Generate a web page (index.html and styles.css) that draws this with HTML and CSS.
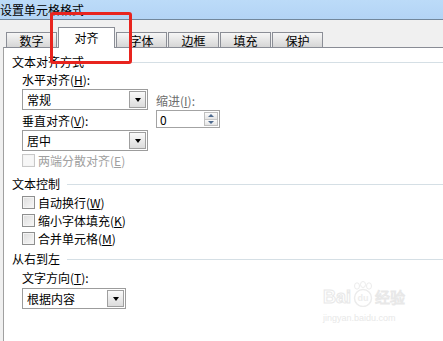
FILE: index.html
```html
<!DOCTYPE html>
<html lang="zh-CN">
<head>
    <meta charset="UTF-8">
    <title>设置单元格格式</title>
    <link rel="stylesheet" href="styles.css">
</head>
<body>
<div class="window">
    <div class="titlebar"><span class="title">设置单元格格式</span></div>

    <div class="tabs">
        <div class="tab">数字</div>
        <div class="tab active">对齐</div>
        <div class="tab">字体</div>
        <div class="tab">边框</div>
        <div class="tab">填充</div>
        <div class="tab">保护</div>
    </div>

    <div class="panel">
        <div class="group-title">文本对齐方式</div>
        <div class="align-group">
            <div class="col-left">
                <div class="label">水平对齐(<u>H</u>):</div>
                <div class="select"><span>常规</span><span class="drop"></span></div>
                <div class="label gap">垂直对齐(<u>V</u>):</div>
                <div class="select"><span>居中</span><span class="drop"></span></div>
            </div>
            <div class="col-right">
                <div class="label muted">缩进(<u>I</u>):</div>
                <div class="spin">
                    <span>0</span>
                    <span class="spin-btns"><span class="up"></span><span class="down"></span></span>
                </div>
            </div>
        </div>
        <div class="check disabled first"><span class="box"></span>两端分散对齐(<u>E</u>)</div>

        <div class="group-title">文本控制</div>
        <div class="checks">
            <div class="check"><span class="box"></span>自动换行(<u>W</u>)</div>
            <div class="check"><span class="box"></span>缩小字体填充(<u>K</u>)</div>
            <div class="check"><span class="box"></span>合并单元格(<u>M</u>)</div>
        </div>

        <div class="group-title rtl">从右到左</div>
        <div class="label indent">文字方向(<u>T</u>):</div>
        <div class="select short"><span>根据内容</span><span class="drop"></span></div>
    </div>

    <!-- 红框标注 -->
    <div class="highlight"></div>

    <div class="watermark">
        <div class="wm-logo">
            <span class="wm-bai">Bai</span>
            <svg class="wm-paw" width="22" height="26" viewBox="0 0 22 26">
                <ellipse cx="5" cy="5" rx="2.5" ry="3.2" fill="none" stroke="#ececec"/>
                <ellipse cx="11" cy="3.5" rx="2.5" ry="3" fill="none" stroke="#ececec"/>
                <ellipse cx="17" cy="5" rx="2.5" ry="3.2" fill="none" stroke="#ececec"/>
                <circle cx="11" cy="17" r="8.5" fill="none" stroke="#ececec" stroke-width="1.5"/>
                <text x="11" y="20" font-size="9" font-weight="bold" text-anchor="middle" fill="#ededed" font-family="Liberation Sans, sans-serif">du</text>
            </svg>
            <span class="wm-jy">经验</span>
        </div>
        <div class="wm-url">jingyan.baidu.com</div>
    </div>
</div>
</body>
</html>
```

FILE: styles.css
```css
html, body {
    margin: 0;
    height: 100%;
}
body {
    font-family: "Noto Sans CJK SC", "Noto Sans", sans-serif;
    font-size: 12px;
    color: #000;
    background: #f0f0f0;
    overflow: hidden;
}
u {
    text-decoration: underline;
}
.window {
    position: relative;
    height: 100%;
    display: flex;
    flex-direction: column;
}

/* 标题栏 */
.titlebar {
    height: 19px;
    border-bottom: 1px solid #72879b;
    background: linear-gradient(#bcdbf8, #b3d4f5);
    display: flex;
    align-items: center;
}
.title {
    margin-left: 0;
    font-size: 12px;
    line-height: 19px;
}

/* 选项卡 */
.tabs {
    height: 27px;
    display: flex;
    align-items: flex-end;
    gap: 1px;
    padding-left: 6px;
}
.tab {
    box-sizing: border-box;
    width: 51px;
    height: 15px;
    border: 1px solid #8b8e96;
    border-bottom: none;
    background: linear-gradient(#f6f6f6, #d6d6d6);
    text-align: center;
    line-height: 15px;
}
.tab.active {
    width: 57px;
    height: 21px;
    margin-bottom: -1px;
    background: #fff;
    line-height: 20px;
    position: relative;
    z-index: 1;
}

/* 内容面板 */
.panel {
    flex: 1;
    margin-left: 3px;
    border-top: 1px solid #898c95;
    border-left: 1px solid #a0a0a0;
    background: #fff;
    padding: 6px 0 0 8px;
}
.group-title {
    display: flex;
    align-items: center;
    height: 16px;
    line-height: 16px;
}
.group-title::after {
    content: "";
    flex: 1;
    height: 1px;
    margin-left: 7px;
    background: #d5dfe5;
}
.label {
    height: 16px;
    line-height: 16px;
}
.label.gap {
    margin-top: 3px;
}
.label.muted {
    color: #6d6d6d;
}
.label.indent {
    margin-top: 3px;
    margin-left: 10px;
}

.align-group {
    display: flex;
    margin-top: 2px;
    margin-left: 10px;
}
.col-left {
    width: 126px;
}
.col-right {
    margin-left: 8px;
    padding-top: 21px;
}

/* 下拉框 */
.select {
    box-sizing: border-box;
    width: 126px;
    height: 21px;
    margin-top: 1px;
    border: 1px solid #9c9c9c;
    display: flex;
    align-items: center;
    justify-content: space-between;
    padding: 0 1px 0 4px;
    background: #fff;
}
.select.short {
    width: 104px;
    margin-left: 10px;
    margin-top: 2px;
}
.drop {
    box-sizing: border-box;
    width: 17px;
    height: 17px;
    border: 1px solid #9f9f9f;
    background: linear-gradient(#fafafa, #dcdcdc);
    display: flex;
    align-items: center;
    justify-content: center;
}
.drop::after {
    content: "";
    border-left: 3px solid transparent;
    border-right: 3px solid transparent;
    border-top: 4px solid #000;
    margin-top: 1px;
}

/* 缩进数值框 */
.spin {
    box-sizing: border-box;
    width: 64px;
    height: 18px;
    margin-top: 1px;
    border: 1px solid #a3a3a3;
    display: flex;
    align-items: center;
    justify-content: space-between;
    padding: 0 1px 0 3px;
}
.spin-btns {
    display: flex;
    flex-direction: column;
    width: 14px;
    height: 14px;
    border: 1px solid #bfbfbf;
    box-sizing: border-box;
}
.spin-btns span {
    flex: 1;
    display: flex;
    align-items: center;
    justify-content: center;
    background: linear-gradient(#fbfbfb, #e4e4e4);
}
.spin-btns .up {
    border-bottom: 1px solid #c8c8c8;
}
.spin-btns .up::after {
    content: "";
    border-left: 3px solid transparent;
    border-right: 3px solid transparent;
    border-bottom: 3px solid #4f6b8f;
}
.spin-btns .down::after {
    content: "";
    border-left: 3px solid transparent;
    border-right: 3px solid transparent;
    border-top: 3px solid #4f6b8f;
}

/* 复选框 */
.check {
    display: flex;
    align-items: center;
    height: 18px;
    margin-left: 10px;
}
.check.first {
    margin-top: 0;
    margin-bottom: 7px;
}
.checks {
    margin-top: 1px;
}
.box {
    box-sizing: border-box;
    width: 13px;
    height: 13px;
    border: 1px solid #8e8f8f;
    background: linear-gradient(135deg, #dcdcdc, #f8f8f8);
    box-shadow: inset 0 0 0 1px #f4f4f4;
    margin-right: 3px;
}
.check.disabled {
    color: #a0a0a0;
}
.check.disabled .box {
    border-color: #c8c8c8;
    background: #f7f7f7;
}
.group-title.rtl {
    margin-top: 4px;
}

/* 红色标注框 */
.highlight {
    position: absolute;
    left: 50px;
    top: 12px;
    width: 76px;
    height: 46px;
    border: 3px solid #e8241e;
    border-radius: 3px;
    z-index: 2;
}

/* 水印 */
.watermark {
    position: absolute;
    left: 323px;
    top: 281px;
    color: #ececec;
    font-family: "Liberation Sans", sans-serif;
}
.wm-logo {
    display: flex;
    align-items: flex-end;
}
.wm-bai {
    font-size: 18px;
    font-weight: bold;
    line-height: 20px;
    color: #fff;
    -webkit-text-stroke: 1px #e8e8e8;
}
.wm-paw {
    margin: 0 1px;
}
.wm-jy {
    font-family: "Noto Sans CJK SC", sans-serif;
    font-size: 15px;
    line-height: 20px;
    color: #fff;
    -webkit-text-stroke: 1px #e8e8e8;
}
.wm-url {
    font-size: 9px;
    margin-top: 6px;
    color: #e8e8e8;
}
```
